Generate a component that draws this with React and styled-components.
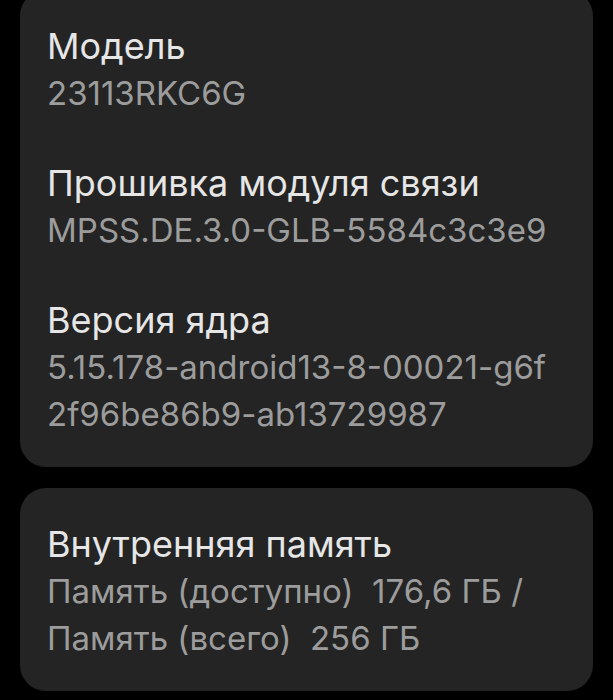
import styled, { createGlobalStyle } from 'styled-components';

const GlobalStyle = createGlobalStyle`
  html, body {
    margin: 0;
    padding: 0;
    background: #000;
  }
  body {
    font-family: Inter, "Noto Sans", sans-serif;
    -webkit-font-smoothing: antialiased;
  }
`;

const sections = [
  {
    id: 'about',
    items: [
      { title: 'Модель', lines: ['23113RKC6G'] },
      { title: 'Прошивка модуля связи', lines: ['MPSS.DE.3.0-GLB-5584c3c3e9'] },
      {
        title: 'Версия ядра',
        lines: ['5.15.178-android13-8-00021-g6f', '2f96be86b9-ab13729987'],
      },
    ],
  },
  {
    id: 'storage',
    items: [
      {
        title: 'Внутренняя память',
        lines: ['Память (доступно)  176,6 ГБ /', 'Память (всего)  256 ГБ'],
      },
    ],
  },
];

const App = () => {
  return (
    <>
      <GlobalStyle />
      <Page>
        {sections.map((section) => (
          <Card key={section.id}>
            {section.items.map((item) => (
              <Item key={item.title}>
                <Title>{item.title}</Title>
                {item.lines.map((line) => (
                  <Value key={line}>{line}</Value>
                ))}
              </Item>
            ))}
          </Card>
        ))}
      </Page>
    </>
  );
};

const Page = styled.div`
  display: flex;
  flex-direction: column;
  gap: 21px;
  padding: 0 20px;
  margin-top: -10px;
`;

const Card = styled.section`
  display: flex;
  flex-direction: column;
  gap: 43px;
  background: #242424;
  border-radius: 26px;
  padding: 33px 27px 29px;
`;

const Item = styled.div`
  display: flex;
  flex-direction: column;
`;

const Title = styled.div`
  font-size: 36px;
  line-height: 47px;
  color: #e6e6e6;
  white-space: nowrap;
`;

const Value = styled.div`
  font-size: 33px;
  line-height: 47px;
  color: #9c9c9c;
  white-space: pre;
`;

export default App;
